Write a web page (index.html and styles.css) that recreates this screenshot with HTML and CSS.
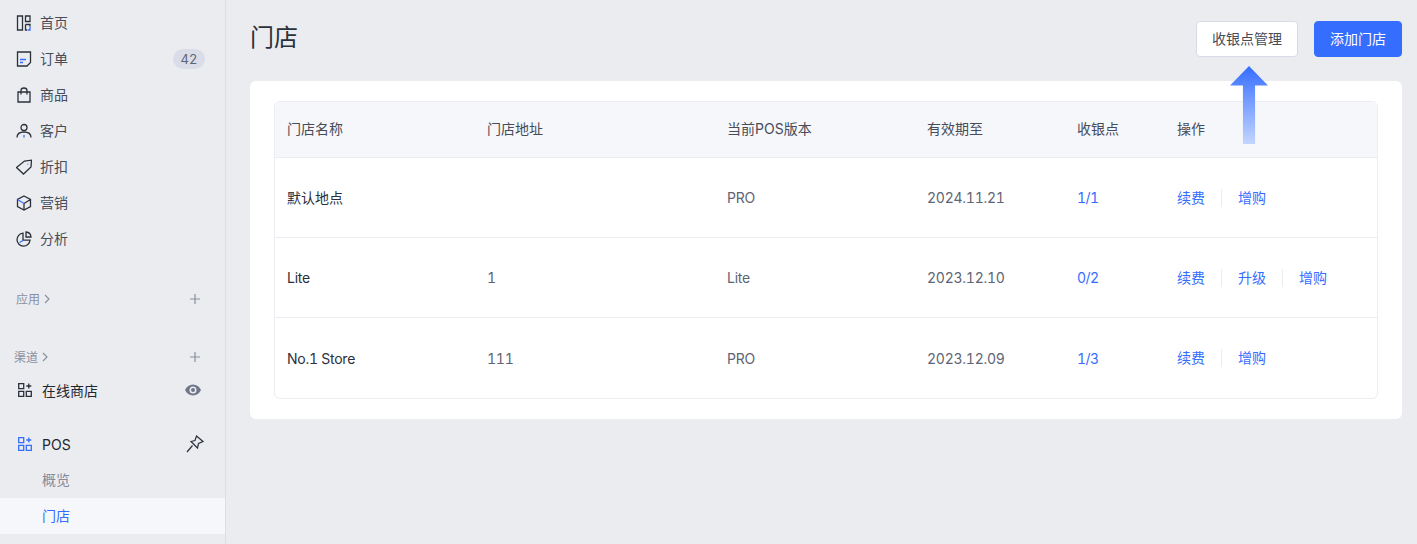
FILE: index.html
```html
<!doctype html>
<html lang="zh">
<head>
    <meta charset="UTF-8">
    <title>门店</title>
    <link rel="stylesheet" href="styles.css">
</head>
<body>

<div class="layout">
    <div class="side">
        <ul class="nav">
            <li>
                <svg class="ico" viewBox="0 0 16 16"><path class="dk" d="M1.500 1h5v14h-5zM9.500 1H14v5.500H9.500zM9.500 9.500H14v2M9.500 9.500V15H11"/><path class="bl" d="M14 11.500V15h-2.500"/></svg>
                <span>首页</span>
            </li>
            <li>
                <svg class="ico" viewBox="0 0 16 16"><path class="dk" d="M1.500 1h13v10.500L11 15H1.500z"/><path class="bl" d="M4 8.500h6M4 11.500h3"/></svg>
                <span>订单</span>
                <em class="badge">42</em>
            </li>
            <li>
                <svg class="ico" viewBox="0 0 16 16"><path class="dk" d="M2 5h12v10H2zM5 7.500V3.500a3 2.500 0 0 1 6 0v4"/></svg>
                <span>商品</span>
            </li>
            <li>
                <svg class="ico" viewBox="0 0 16 16"><circle class="dk" cx="8" cy="4.500" r="3"/><path class="dk" d="M1 14.500c0-3.500 3-5.500 7-5.500s7 2 7 5.500"/><path class="bl" d="M8 12v2.500"/></svg>
                <span>客户</span>
            </li>
            <li>
                <svg class="ico" viewBox="0 0 16 16"><path class="dk" d="M.5 8.500 8.500 2l7-.8-.5 6.800-7.500 7z"/><path class="bl" d="M11.800 4.800v.8"/></svg>
                <span>折扣</span>
            </li>
            <li>
                <svg class="ico" viewBox="0 0 16 16"><path class="dk" d="M8 1l6.500 3.500v7L8 15l-6.500-3.500v-7zM8 8.500V15M14.500 4.500 8 8.500"/><path class="bl" d="M1.500 4.500 8 8.500"/></svg>
                <span>营销</span>
            </li>
            <li>
                <svg class="ico" viewBox="0 0 16 16"><path class="dk" d="M7 2.200a6.500 6.500 0 1 0 7 7H7zM10 1a5.500 5.500 0 0 1 5 5h-5z"/><path class="bl" d="M3.500 11.500 7 9.500"/></svg>
                <span>分析</span>
            </li>
        </ul>

        <div class="group group-app">
            <span>应用</span>
            <svg class="arrow" viewBox="0 0 8 10"><path d="M2 1l4 4-4 4"/></svg>
            <svg class="plus" viewBox="0 0 12 12"><path d="M6 1v10M1 6h10"/></svg>
        </div>

        <div class="group group-channel">
            <span>渠道</span>
            <svg class="arrow" viewBox="0 0 8 10"><path d="M2 1l4 4-4 4"/></svg>
            <svg class="plus" viewBox="0 0 12 12"><path d="M6 1v10M1 6h10"/></svg>
        </div>

        <div class="channel">
            <svg class="ico2" viewBox="0 0 14 14"><path class="dk" d="M.7.7h5v5h-5zM.7 8.300h5v5h-5zM8.300 8.300h5v5h-5zM10.800.5v5M8.300 3h5"/></svg>
            <b>在线商店</b>
            <svg class="eye" viewBox="0 0 16 12"><path d="M8 .5C4.500.5 1.500 2.600 0 6c1.500 3.400 4.500 5.500 8 5.500s6.500-2.100 8-5.500C14.500 2.600 11.500.5 8 .5zm0 9A3.500 3.500 0 1 1 8 2.500a3.500 3.500 0 0 1 0 7zM8 4a2 2 0 1 0 0 4 2 2 0 0 0 0-4z"/></svg>
        </div>

        <div class="channel pos">
            <svg class="ico2" viewBox="0 0 14 14"><path class="bl" d="M.7.7h5v5h-5zM.7 8.300h5v5h-5zM8.300 8.300h5v5h-5zM10.800.5v5M8.300 3h5"/></svg>
            <b>POS</b>
            <svg class="pin" viewBox="0 0 18 18"><path d="M10.500 1 17 6.500l-4.500 2-1 4.500-6.500-6.500 4-1zM6.500 10.500 1 17"/></svg>
        </div>
        <div class="sub">概览</div>
        <div class="sub on">门店</div>
    </div>

    <div class="main">
        <div class="head">
            <h1>门店</h1>
            <div class="btns">
                <button class="btn">收银点管理</button>
                <button class="btn primary">添加门店</button>
            </div>
        </div>

        <div class="card">
            <table>
                <thead>
                    <tr>
                        <th class="c1">门店名称</th>
                        <th class="c2">门店地址</th>
                        <th class="c3">当前POS版本</th>
                        <th class="c4">有效期至</th>
                        <th class="c5">收银点</th>
                        <th>操作</th>
                    </tr>
                </thead>
                <tbody>
                    <tr>
                        <td class="name">默认地点</td>
                        <td></td>
                        <td>PRO</td>
                        <td>2024.11.21</td>
                        <td><a>1/1</a></td>
                        <td class="ops"><a>续费</a><a>增购</a></td>
                    </tr>
                    <tr>
                        <td class="name">Lite</td>
                        <td>1</td>
                        <td>Lite</td>
                        <td>2023.12.10</td>
                        <td><a>0/2</a></td>
                        <td class="ops"><a>续费</a><a>升级</a><a>增购</a></td>
                    </tr>
                    <tr>
                        <td class="name">No.1 Store</td>
                        <td>111</td>
                        <td>PRO</td>
                        <td>2023.12.09</td>
                        <td><a>1/3</a></td>
                        <td class="ops"><a>续费</a><a>增购</a></td>
                    </tr>
                </tbody>
            </table>
        </div>
    </div>
</div>

<!-- 指向收银点管理的提示箭头 -->
<div class="tip-arrow"></div>

</body>
</html>
```

FILE: styles.css
```css
*{
    box-sizing: border-box;
}
html,body{
    height: 100%;
}
body{
    margin: 0;
    background-color: #ebecf0;
    color: #2b303b;
    font-family: Inter, "Noto Sans CJK SC", sans-serif;
    font-size: 14px;
    font-variant-numeric: tabular-nums;
    overflow: hidden;
    position: relative;
}
ul{
    margin: 0;
    padding: 0;
    list-style: none;
}
.layout{
    display: flex;
    height: 544px;
}

/* 侧边栏 */
.side{
    width: 226px;
    flex: none;
    border-right: 1px solid #dcdde8;
    padding-top: 4px;
}
.nav li{
    display: flex;
    align-items: center;
    height: 36px;
    padding: 0 20px 0 16px;
    color: #474c58;
}
.ico{
    width: 16px;
    height: 16px;
    margin-right: 8px;
    margin-top: 1px;
    fill: none;
}
.dk{
    fill: none;
    stroke: #2b303b;
    stroke-width: 1.300;
}
.bl{
    fill: none;
    stroke: #356dff;
    stroke-width: 1.300;
}
.badge{
    margin-left: auto;
    margin-top: 1px;
    width: 32px;
    height: 20px;
    line-height: 20px;
    border-radius: 10px;
    background-color: #dadde8;
    color: #5d6475;
    font-size: 13px;
    font-style: normal;
    text-align: center;
}
.group{
    display: flex;
    align-items: center;
    height: 20px;
    padding-right: 24px;
    color: #8a90a0;
    font-size: 12px;
}
.group-app{
    margin-top: 32px;
    padding-left: 16px;
}
.group-channel{
    margin-top: 38px;
    padding-left: 14px;
}
.arrow{
    width: 8px;
    height: 10px;
    margin-left: 3px;
    margin-top: 1px;
    fill: none;
    stroke: #8a90a0;
    stroke-width: 1.200;
}
.plus{
    width: 12px;
    height: 12px;
    margin-left: auto;
    margin-top: 1px;
    fill: none;
    stroke: #8a90a0;
    stroke-width: 1.200;
}
.channel{
    display: flex;
    align-items: center;
    height: 36px;
    margin-top: 6px;
    padding: 0 24px 0 18px;
}
.channel b{
    font-weight: 400;
    color: #22262f;
}
.ico2{
    width: 14px;
    height: 14px;
    margin-right: 10px;
}
.eye{
    width: 16px;
    height: 12px;
    margin-left: auto;
    fill: #6f7689;
    fill-rule: evenodd;
}
.pos{
    margin-top: 18px;
    padding-right: 21px;
}
.pin{
    width: 18px;
    height: 18px;
    margin-left: auto;
    fill: none;
    stroke: #2b303b;
    stroke-width: 1.200;
}
.sub{
    height: 36px;
    line-height: 36px;
    padding-left: 42px;
    color: #858b9b;
}
.sub.on{
    background-color: #f6f7fb;
    color: #356dff;
}

/* 内容区 */
.main{
    flex: 1;
    padding: 21px 15px 0 24px;
}
.head{
    display: flex;
    justify-content: space-between;
    height: 36px;
}
h1{
    margin: 0;
    font-size: 24px;
    font-weight: 400;
    line-height: 34px;
}
.btns{
    display: flex;
    gap: 16px;
}
.btn{
    height: 36px;
    padding: 0 15px 2px;
    border: 1px solid #d8dbe6;
    border-radius: 4px;
    background-color: #fff;
    color: #474c58;
    font-family: inherit;
    font-size: 14px;
}
.btn.primary{
    border-color: #356dff;
    background-color: #356dff;
    color: #fff;
}
.card{
    margin-top: 24px;
    padding: 20px 24px;
    background-color: #fff;
    border-radius: 6px;
}
table{
    width: 100%;
    table-layout: fixed;
    border-collapse: separate;
    border-spacing: 0;
    border: 1px solid #ebedf2;
    border-radius: 6px;
}
th{
    height: 56px;
    padding: 0 12px 3px;
    background-color: #f6f7fb;
    border-bottom: 1px solid #ebedf2;
    font-weight: 400;
    text-align: left;
    color: #474c58;
}
th:first-child{
    border-top-left-radius: 6px;
}
th:last-child{
    border-top-right-radius: 6px;
}
.c1{
    width: 200px;
}
.c2{
    width: 240px;
}
.c3{
    width: 200px;
}
.c4{
    width: 150px;
}
.c5{
    width: 100px;
}
td{
    height: 80px;
    padding: 0 12px;
    border-bottom: 1px solid #ebedf2;
    color: #5d6475;
    letter-spacing: -.25px;
}
tr:last-child td{
    border-bottom: none;
}
td.name{
    color: #2b303b;
}
tr:first-child td.name{
    padding-bottom: 2px;
    letter-spacing: 0;
}
a{
    color: #356dff;
    letter-spacing: -.6px;
}
.ops{
    white-space: nowrap;
}
.ops a{
    display: inline-block;
    line-height: 18px;
    padding-right: 16px;
    margin-right: 16px;
    border-right: 1px solid #ebedf2;
    letter-spacing: 0;
}
.ops a:last-child{
    border-right: none;
}

/* 提示箭头 */
.tip-arrow{
    position: absolute;
    left: 1230px;
    top: 66px;
    width: 38px;
    height: 78px;
    background: linear-gradient(#356dff, #c3d5ff);
    clip-path: polygon(50% 0, 100% 25%, 66% 25%, 66% 100%, 34% 100%, 34% 25%, 0 25%);
}
```
